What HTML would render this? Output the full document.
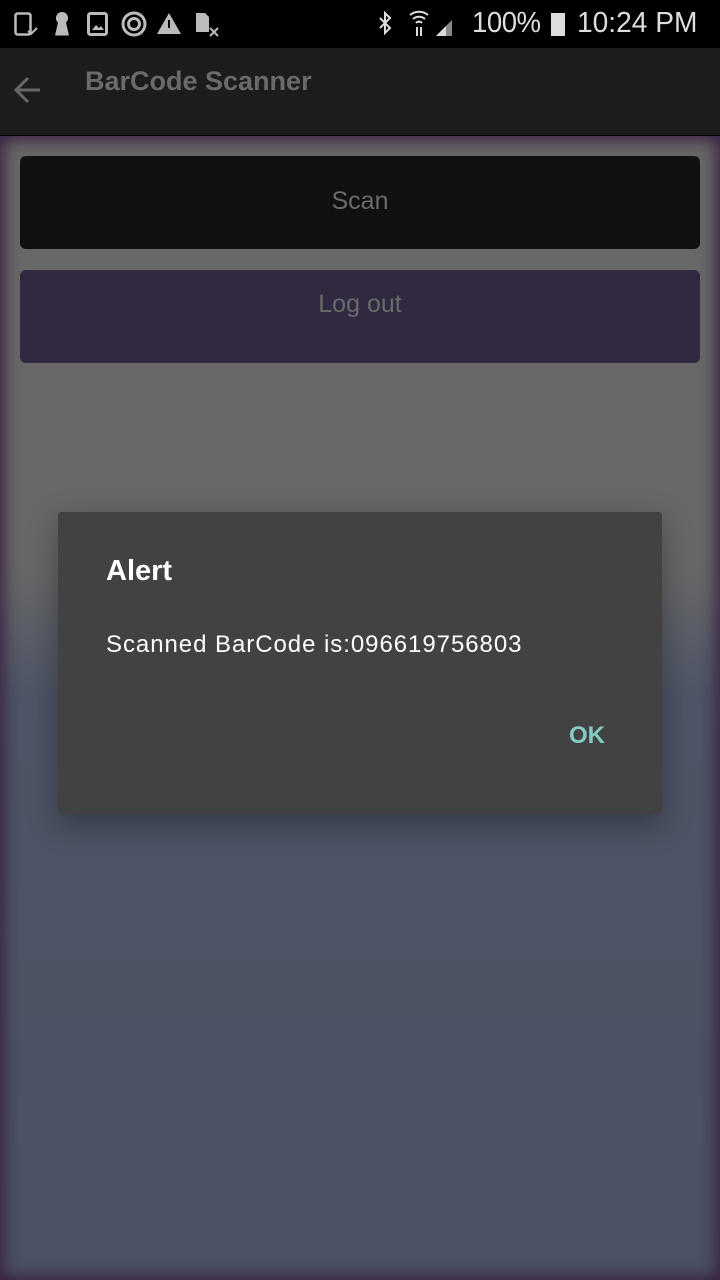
<!DOCTYPE html>
<html><head><meta charset="utf-8"><style>
html,body{margin:0;padding:0;width:720px;height:1280px;overflow:hidden;font-family:"Liberation Sans",sans-serif}
#sb{position:absolute;left:0;top:0;width:720px;height:48px;background:#000;color:#ddd}
#ab{position:absolute;left:0;top:48px;width:720px;height:87px;background:#1c1c1c;border-bottom:1px solid #000}
#bg{position:absolute;left:0;top:136px;width:720px;height:1144px;background:linear-gradient(#686868 0,#686868 430px,#4d5566 560px,#4a5263 100%)}
#vig{position:absolute;left:0;top:136px;width:720px;height:1144px;box-shadow:inset 0 0 16px 4px #3a2042}
.btn{position:absolute;left:20px;width:680px;height:93px;border-radius:6px;color:#6a6a6a;font-size:25px;text-align:center}
#dlg{position:absolute;left:58px;top:512px;width:604px;height:302px;background:#424242;border-radius:3px;box-shadow:0 10px 30px rgba(0,0,0,.35)}
</style></head><body>
<div id="sb">
<svg width="240" height="48" style="position:absolute;left:0;top:0" fill="#bbb" stroke="#bbb">
<rect x="15.5" y="13.5" width="15" height="21" rx="2" fill="none" stroke-width="2.5"/><path d="M28 31l3 3 6-6" fill="none" stroke-width="2"/>
<path d="M62 12a6 6 0 0 1 4 10.5l3 13h-14l3-13a6 6 0 0 1 4-10.5z" stroke="none"/>
<rect x="88.5" y="13.5" width="18" height="21" rx="2" fill="none" stroke-width="3"/><path d="M92 30l4-5 3 3 2-2 3 4z" stroke="none"/>
<circle cx="134" cy="24" r="11" fill="none" stroke-width="3"/><circle cx="134" cy="24" r="5.5" fill="none" stroke-width="3"/>
<path d="M169 13l12 21h-24z" stroke="none"/><rect x="168" y="20" width="2" height="8" fill="#000" stroke="none"/>
<path d="M196 13h9l4 4v15h-13z" stroke="none"/><path d="M210 28l8 8M218 28l-8 8" fill="none" stroke-width="2"/>
</svg>
<svg width="100" height="48" style="position:absolute;left:370px;top:0" fill="#ddd" stroke="#ddd">
<path d="M10 18l10 10-5 5v-20l5 5-10 10" fill="none" stroke-width="2"/>
<path d="M40 15a14 14 0 0 1 18 0M43 19a9 9 0 0 1 12 0M46 23a4 4 0 0 1 6 0" fill="none" stroke-width="2"/><path d="M47 27v9M51 27v9" stroke-width="2"/>
<path d="M66 36l16-16v16z" fill="#888" stroke="none"/><path d="M66 36l10-10v10z" stroke="none"/>
</svg>
<div style="position:absolute;left:472px;top:7px;font-size:29px;letter-spacing:-0.5px;transform:scaleX(0.95);transform-origin:left">100%</div>
<div style="position:absolute;left:551px;top:13px;width:14px;height:23px;background:#ddd"></div>
<div style="position:absolute;left:577px;top:7px;font-size:29px;transform:scaleX(0.97);transform-origin:left">10:24 PM</div>
</div>
<div id="ab">
<svg width="40" height="40" style="position:absolute;left:10px;top:22px" fill="none" stroke="#666" stroke-width="3"><path d="M6 20h24M18 8L6 20l12 12"/></svg>
<div style="position:absolute;left:85px;top:18px;font-size:27px;font-weight:bold;color:#6a6a6a">BarCode Scanner</div>
</div>
<div id="bg"></div>
<div id="vig"></div>
<div class="btn" style="top:156px;background:#101010;line-height:91px">Scan</div>
<div class="btn" style="top:270px;background:#30293f;line-height:68px">Log out</div>
<div id="dlg">
<div style="position:absolute;left:48px;top:43px;font-size:29px;font-weight:bold;color:#fff">Alert</div>
<div style="position:absolute;left:48px;top:119px;font-size:24px;letter-spacing:0.95px;color:#fff">Scanned BarCode is:096619756803</div>
<div style="position:absolute;left:511px;top:210px;font-size:24px;font-weight:bold;color:#80cbc4">OK</div>
</div>
</body></html>
